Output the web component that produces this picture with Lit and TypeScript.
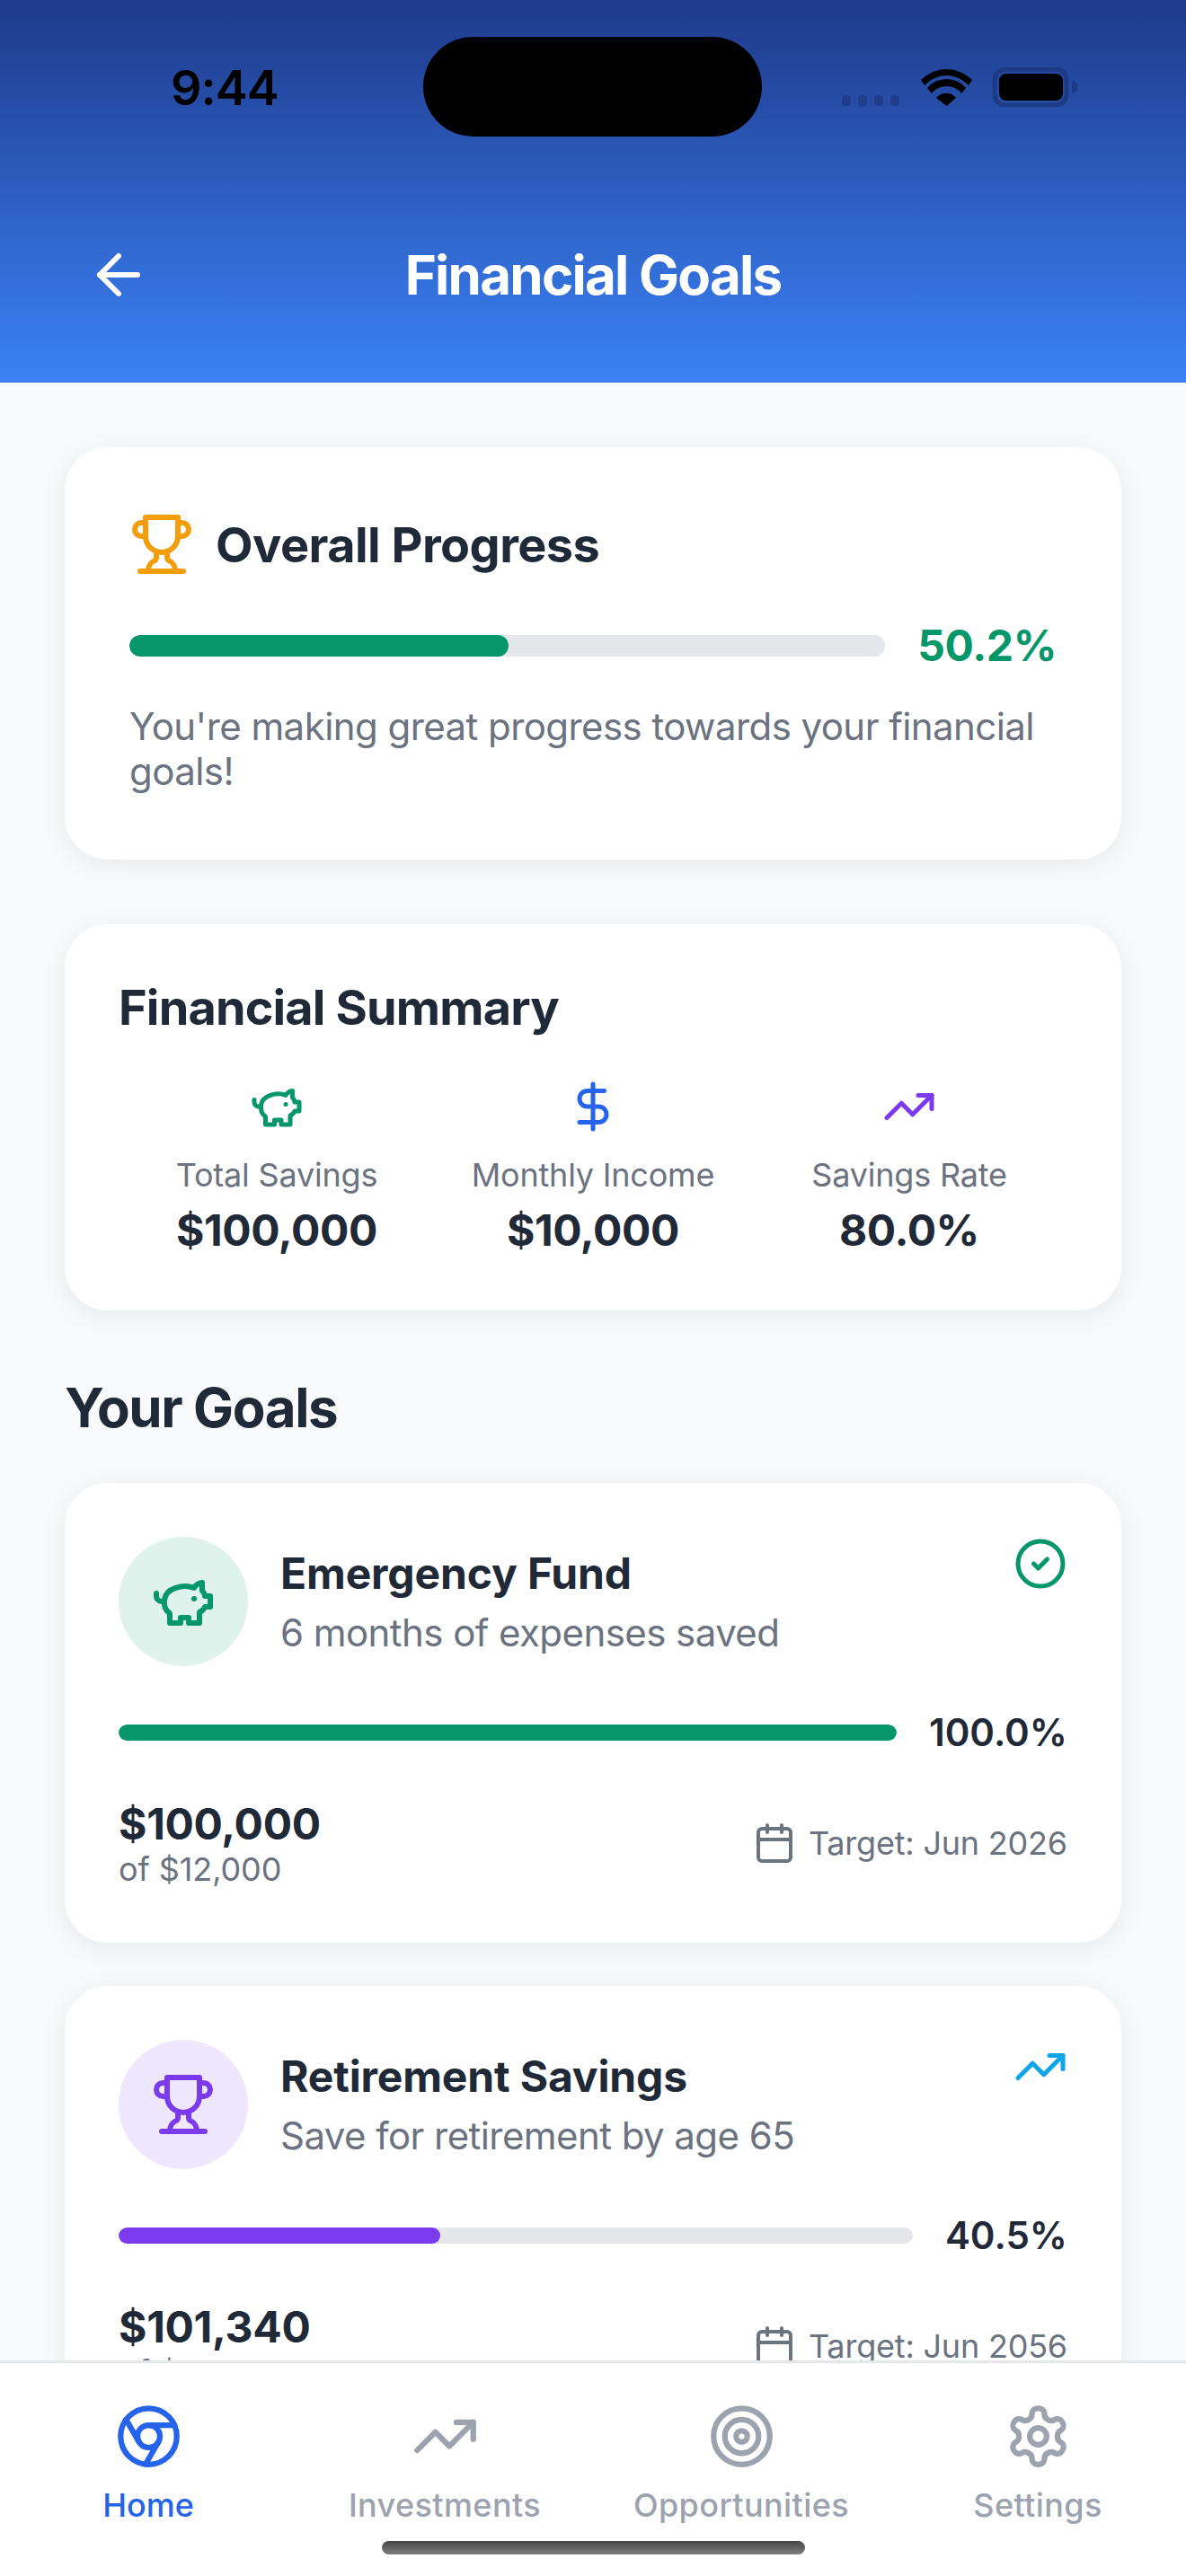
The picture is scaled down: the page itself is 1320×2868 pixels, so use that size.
import { LitElement, html, css, svg } from "lit";
import { customElement } from "lit/decorators.js";

const icon = (size: number, body: unknown, cls = "") => html`<svg class=${cls} width=${size} height=${size} viewBox="0 0 24 24" fill="none" stroke="currentColor" stroke-width="2" stroke-linecap="round" stroke-linejoin="round">${body}</svg>`;

const trophy = svg`<path d="M6 9H4.5a2.5 2.5 0 0 1 0-5H6"/><path d="M18 9h1.5a2.5 2.5 0 0 0 0-5H18"/><path d="M4 22h16"/><path d="M10 14.66V17c0 .55-.47.98-.97 1.21C7.85 18.75 7 20.24 7 22"/><path d="M14 14.66V17c0 .55.47.98.97 1.21C16.15 18.75 17 20.24 17 22"/><path d="M18 2H6v7a6 6 0 0 0 12 0V2Z"/>`;
const pig = svg`<path d="M19 5c-1.5 0-2.8 1.4-3 2-3.5-1.5-11-.3-11 5 0 1.8 0 3 2 4.5V20h4v-2h3v2h4v-4c1-.5 1.7-1 2-2h2v-4h-2c0-1-.5-1.5-1-2V5z"/><path d="M2 9v1c0 1.1.9 2 2 2h1"/><path d="M16 11h.01"/>`;
const dollar = svg`<line x1="12" x2="12" y1="2" y2="22"/><path d="M17 5H9.5a3.5 3.5 0 0 0 0 7h5a3.5 3.5 0 0 1 0 7H6"/>`;
const trend = svg`<polyline points="22 7 13.5 15.5 8.5 10.5 2 17"/><polyline points="16 7 22 7 22 13"/>`;
const check = svg`<circle cx="12" cy="12" r="10"/><path d="m9 12 2 2 4-4"/>`;
const calendar = svg`<path d="M8 2v4"/><path d="M16 2v4"/><rect width="18" height="18" x="3" y="4" rx="2"/><path d="M3 10h18"/>`;
const chromium = svg`<circle cx="12" cy="12" r="10"/><circle cx="12" cy="12" r="4"/><line x1="21.17" x2="12" y1="8" y2="8"/><line x1="3.95" x2="8.54" y1="6.06" y2="14"/><line x1="10.88" x2="15.46" y1="21.94" y2="14"/>`;
const target = svg`<circle cx="12" cy="12" r="10"/><circle cx="12" cy="12" r="6"/><circle cx="12" cy="12" r="2"/>`;
const settings = svg`<path d="M12.22 2h-.44a2 2 0 0 0-2 2v.18a2 2 0 0 1-1 1.73l-.43.25a2 2 0 0 1-2 0l-.15-.08a2 2 0 0 0-2.73.73l-.22.38a2 2 0 0 0 .73 2.73l.15.1a2 2 0 0 1 1 1.72v.51a2 2 0 0 1-1 1.74l-.15.09a2 2 0 0 0-.73 2.73l.22.38a2 2 0 0 0 2.73.73l.15-.08a2 2 0 0 1 2 0l.43.25a2 2 0 0 1 1 1.73V20a2 2 0 0 0 2 2h.44a2 2 0 0 0 2-2v-.18a2 2 0 0 1 1-1.73l.43-.25a2 2 0 0 1 2 0l.15.08a2 2 0 0 0 2.73-.73l.22-.39a2 2 0 0 0-.73-2.73l-.15-.08a2 2 0 0 1-1-1.74v-.5a2 2 0 0 1 1-1.74l.15-.09a2 2 0 0 0 .73-2.73l-.22-.38a2 2 0 0 0-2.73-.73l-.15.08a2 2 0 0 1-2 0l-.43-.25a2 2 0 0 1-1-1.73V4a2 2 0 0 0-2-2z"/><circle cx="12" cy="12" r="3"/>`;
const arrowLeft = svg`<path d="m12 19-7-7 7-7"/><path d="M19 12H5"/>`;

const GREEN = "#059669";
const PURPLE = "#7c3aed";

const goals = [
  { name: "Emergency Fund", sub: "6 months of expenses saved", pct: 100, label: "100.0%", amount: "$100,000", of: "of $12,000", target: "Target: Jun 2026", color: GREEN, bg: "#dff2ec", glyph: pig, status: check, statusCls: "st-green" },
  { name: "Retirement Savings", sub: "Save for retirement by age 65", pct: 40.5, label: "40.5%", amount: "$101,340", of: "of $250,000", target: "Target: Jun 2056", color: PURPLE, bg: "#efe7fd", glyph: trophy, status: trend, statusCls: "st-blue" },
];

@customElement("app-root")
export class AppRoot extends LitElement {
  static styles = css`
    :host { display: block; font-family: Inter, "Liberation Sans", sans-serif; }
    * { box-sizing: border-box; }
    .app { width: 1320px; height: 2868px; display: flex; flex-direction: column; background: #f9fafb; position: relative; overflow: hidden; color: #1f2937; }
    .header { height: 426px; flex: none; background: linear-gradient(180deg, #1e3a8a, #3b82f6); position: relative; }
    .status { height: 270px; padding: 70px 122px 0 190px; display: flex; justify-content: space-between; align-items: flex-start; }
    .time { font-size: 54px; line-height: 56px; font-weight: 600; color: #000; letter-spacing: -1px; }
    .island { position: absolute; left: 471px; top: 41px; width: 377px; height: 111px; border-radius: 56px; background: #000; }
    .sys { position: absolute; left: 937px; top: 75px; }
    .nav-row { display: flex; align-items: center; justify-content: center; height: 72px; position: relative; color: #fff; }
    .nav-row .back { position: absolute; left: 96px; top: 0; }
    .nav-row h1 { margin: 0; font-size: 60px; line-height: 72px; font-weight: 700; color: #fff; letter-spacing: -1.75px; }
    .content { flex: 1; min-height: 0; overflow: hidden; padding: 72px 72px 0; }
    .card { background: #fff; border-radius: 48px; box-shadow: 0 6px 30px rgba(0,0,0,0.07); }
    .overall { padding: 72px; margin-bottom: 72px; }
    .ov-head { display: flex; align-items: center; gap: 24px; margin-bottom: 48px; color: #f59e0b; }
    h2 { margin: 0; font-size: 54px; line-height: 65px; font-weight: 700; color: #1f2937; }
    .ov-head h2 { letter-spacing: -0.55px; }
    .ov-bar { display: flex; align-items: center; gap: 36px; margin-bottom: 36px; }
    .track { flex: 1; background: #e5e7eb; border-radius: 12px; overflow: hidden; }
    .ov-bar .track { height: 24px; }
    .fill { height: 100%; border-radius: 12px; }
    .ov-pct { font-size: 48px; line-height: 58px; font-weight: 700; color: #059669; letter-spacing: -0.4px; }
    .ov-text { margin: 0; font-size: 42px; line-height: 50.4px; color: #6b7280; letter-spacing: -0.56px; }
    .summary { padding: 60px; margin-bottom: 72px; }
    .summary h2 { margin-bottom: 48px; letter-spacing: -0.85px; }
    .sum-grid { display: grid; grid-template-columns: repeat(3, 1fr); }
    .sum-item { display: flex; flex-direction: column; align-items: center; }
    .sum-label { margin-top: 25px; font-size: 36px; line-height: 43px; color: #6b7280; letter-spacing: -0.2px; }
    .sum-value { margin-top: 11px; font-size: 48px; line-height: 58px; font-weight: 700; color: #1f2937; letter-spacing: -0.4px; }
    .c-green { color: #059669; } .c-blue { color: #2563eb; } .c-purple { color: #7c3aed; }
    .goals-title { margin: 0 0 48px; font-size: 60px; line-height: 72px; font-weight: 700; color: #1f2937; letter-spacing: -1.4px; }
    .goal { padding: 60px; margin-bottom: 48px; }
    .g-head { display: flex; align-items: flex-start; margin-bottom: 49px; }
    .g-icon { width: 144px; height: 144px; border-radius: 50%; flex: none; display: flex; align-items: center; justify-content: center; margin-right: 36px; }
    .g-info { flex: 1; height: 144px; display: flex; flex-direction: column; justify-content: center; }
    .g-name { font-size: 48px; line-height: 58px; font-weight: 700; color: #1f2937; margin-bottom: 12px; letter-spacing: -0.15px; }
    .g-sub { font-size: 42px; line-height: 50px; color: #6b7280; letter-spacing: -0.56px; }
    .st-green { color: #059669; } .st-blue { color: #0ea5e9; }
    .g-bar { display: flex; align-items: center; gap: 36px; margin-bottom: 48px; }
    .g-bar .track { height: 18px; border-radius: 9px; }
    .g-bar .fill { border-radius: 9px; }
    .g-pct { font-size: 42px; line-height: 50px; font-weight: 600; color: #1f2937; }
    .g-foot { display: flex; align-items: center; justify-content: space-between; }
    .g-amount { font-size: 48px; line-height: 58px; font-weight: 700; color: #1f2937; letter-spacing: -0.3px; }
    .g-of { font-size: 36px; line-height: 43px; color: #6b7280; letter-spacing: -0.1px; }
    .g-target { display: flex; align-items: center; gap: 14px; font-size: 36px; line-height: 43px; color: #6b7280; letter-spacing: -0.2px; }
    .tabs { height: 240px; flex: none; background: #fff; border-top: 3px solid #e5e7eb; display: grid; grid-template-columns: repeat(4, 330px); padding-top: 44px; position: relative; }
    .tab { display: flex; flex-direction: column; align-items: center; color: #9ca3af; font-size: 36px; line-height: 43px; font-weight: 500; letter-spacing: 0.4px; }
    .tab span { margin-top: 18px; }
    .tab.active { color: #2563eb; letter-spacing: 0; }
    .home-ind { position: absolute; left: 425px; top: 198px; width: 471px; height: 15px; border-radius: 8px; background: linear-gradient(180deg, #454545, #7f7f7f); }
  `;

  render() {
    return html`<div class="app">
      <div class="header">
        <div class="status"><div class="time">9:44</div></div>
        <div class="island"></div>
        <svg class="sys" width="262" height="44" viewBox="0 0 262 44">
          <g fill="#1f3f8c"><rect x="0" y="31" width="10" height="12" rx="4"/><rect x="18" y="31" width="10" height="12" rx="4"/><rect x="36" y="31" width="10" height="12" rx="4"/><rect x="54" y="31" width="10" height="12" rx="4"/></g>
          <path d="M88 15 A40 40 0 0 1 145 15 L141 21 A33 33 0 0 0 92 21 Z" fill="#000" transform="translate(0 -1)"/>
          <path d="M95 24 A28 28 0 0 1 138 24 L133 30 A21 21 0 0 0 100 30 Z" fill="#000" transform="translate(0 -1)"/>
          <path d="M105 34 A14 14 0 0 1 127 34 L116.5 43 Z" fill="#000"/>
          <rect x="170" y="2" width="80" height="40" rx="12" fill="none" stroke="#1d3b85" stroke-width="5"/>
          <rect x="175" y="7" width="71" height="30" rx="8" fill="#000"/>
          <path d="M256 15 a7 7 0 0 1 0 14 Z" fill="#1d3b85"/>
        </svg>
        <div class="nav-row">
          ${icon(72, arrowLeft, "back")}
          <h1>Financial Goals</h1>
        </div>
      </div>
      <div class="content">
        <div class="card overall">
          <div class="ov-head">${icon(72, trophy)}<h2>Overall Progress</h2></div>
          <div class="ov-bar">
            <div class="track"><div class="fill" style="width:50.2%;background:${GREEN}"></div></div>
            <div class="ov-pct">50.2%</div>
          </div>
          <p class="ov-text">You're making great progress towards your financial goals!</p>
        </div>
        <div class="card summary">
          <h2>Financial Summary</h2>
          <div class="sum-grid">
            <div class="sum-item">${icon(60, pig, "c-green")}<div class="sum-label">Total Savings</div><div class="sum-value">$100,000</div></div>
            <div class="sum-item">${icon(60, dollar, "c-blue")}<div class="sum-label">Monthly Income</div><div class="sum-value">$10,000</div></div>
            <div class="sum-item">${icon(60, trend, "c-purple")}<div class="sum-label">Savings Rate</div><div class="sum-value">80.0%</div></div>
          </div>
        </div>
        <h3 class="goals-title">Your Goals</h3>
        ${goals.map((g) => html`<div class="card goal">
          <div class="g-head">
            <div class="g-icon" style="background:${g.bg};color:${g.color}">${icon(72, g.glyph)}</div>
            <div class="g-info"><div class="g-name">${g.name}</div><div class="g-sub">${g.sub}</div></div>
            ${icon(60, g.status, g.statusCls)}
          </div>
          <div class="g-bar">
            <div class="track"><div class="fill" style="width:${g.pct}%;background:${g.color}"></div></div>
            <div class="g-pct">${g.label}</div>
          </div>
          <div class="g-foot">
            <div><div class="g-amount">${g.amount}</div><div class="g-of">${g.of}</div></div>
            <div class="g-target">${icon(48, calendar)}<span>${g.target}</span></div>
          </div>
        </div>`)}
      </div>
      <div class="tabs">
        <div class="tab active">${icon(75, chromium)}<span>Home</span></div>
        <div class="tab">${icon(75, trend)}<span>Investments</span></div>
        <div class="tab">${icon(75, target)}<span>Opportunities</span></div>
        <div class="tab">${icon(75, settings)}<span>Settings</span></div>
        <div class="home-ind"></div>
      </div>
    </div>`;
  }
}
